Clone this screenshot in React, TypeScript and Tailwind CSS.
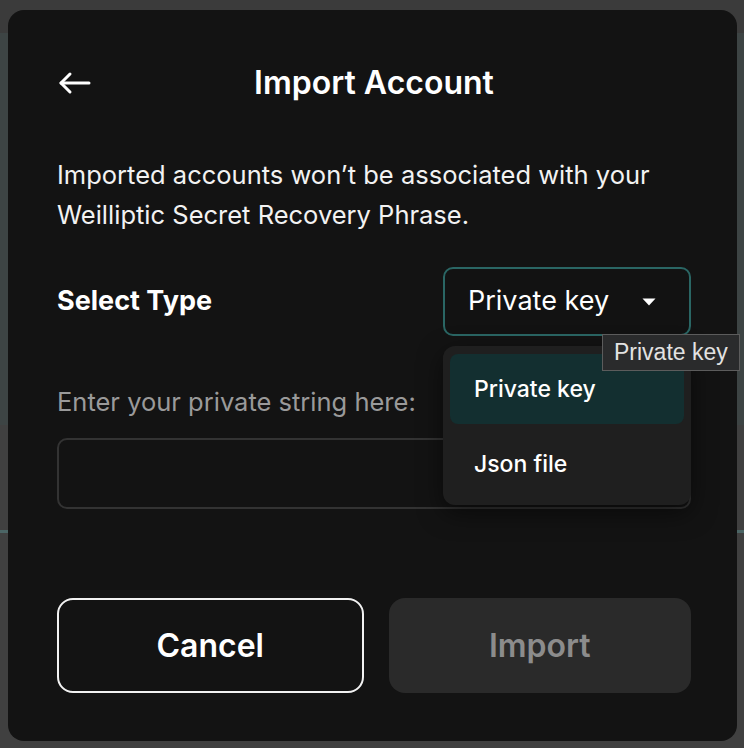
import { useState } from 'react'

const font = { fontFamily: 'Inter, "Noto Sans", sans-serif' }

function BackArrow() {
  return (
    <svg width="34" height="24" viewBox="0 0 34 24" fill="none" stroke="#ffffff" strokeWidth="3" strokeLinecap="round" strokeLinejoin="round">
      <line x1="3" y1="12" x2="31" y2="12" />
      <polyline points="12 3 3 12 12 21" />
    </svg>
  )
}

function Caret() {
  return (
    <svg width="14" height="8" viewBox="0 0 14 8" fill="#ffffff">
      <path d="M0.5 0.5 H13.5 L7 7.5 Z" />
    </svg>
  )
}

export default function App() {
  const [type, setType] = useState('Private key')
  const [open] = useState(true)

  return (
    <div className="relative w-[744px] h-[748px] overflow-hidden bg-[#3c3c3c]" style={font}>
      {/* faded page behind the dialog */}
      <div className="flex flex-col h-full">
        <div className="h-[33px] bg-[#3b3b3b]" />
        <div className="h-[392px] bg-[#3d4444]" />
        <div className="h-[105px] bg-[#404040]" />
        <div className="h-[3px] bg-[#4b6565]" />
        <div className="flex-1 bg-[#404040]" />
      </div>

      {/* dialog */}
      <div className="absolute left-[8px] top-[10px] w-[729px] h-[731px] rounded-[16px] bg-[#131313] pl-[49px] pr-[46px] pt-[43px] text-white">
        <div className="relative flex items-center justify-center h-[60px]">
          <button className="absolute left-[1px] top-[18px]">
            <BackArrow />
          </button>
          <h1 className="text-[32px] font-semibold">Import Account</h1>
        </div>

        <p className="mt-[42px] text-[25.5px] leading-[40px] text-[#f2f2f2]">
          Imported accounts won’t be associated with your Weilliptic Secret Recovery Phrase.
        </p>

        <div className="mt-[32px] flex items-center justify-between h-[69px]">
          <span className="text-[27px] font-bold">Select Type</span>
          <div className="relative w-[248px] h-[69px]">
            <button className="w-full h-full flex items-center justify-between pl-[23px] pr-[33px] rounded-[10px] border-2 border-[#2a6664] bg-[#121212]">
              <span className="text-[27px]">{type}</span>
              <Caret />
            </button>

            {open && (
              <div className="absolute left-0 top-[79px] w-[248px] h-[159px] rounded-[12px] bg-[#1f1f1f] px-[7px] pt-[8px] shadow-[0_8px_24px_rgba(0,0,0,0.5)] z-10">
                <div
                  className="flex items-center h-[70px] pl-[24px] rounded-[8px] bg-[#132f30] text-[23px] font-medium"
                  onClick={() => setType('Private key')}
                >
                  Private key
                </div>
                <div
                  className="mt-[5px] flex items-center h-[70px] pl-[24px] rounded-[8px] text-[23px] font-medium"
                  onClick={() => setType('Json file')}
                >
                  Json file
                </div>
              </div>
            )}
          </div>
        </div>

        <div className="mt-[50px] h-[32px] flex items-center text-[25.5px] text-[#9a9a9a]">
          Enter your private string here:
        </div>
        <input className="mt-[20px] w-full h-[71px] rounded-[10px] border-2 border-[#333333] bg-[#131313] outline-none px-4 text-[22px]" />

        <div className="mt-[89px] flex gap-[25px]">
          <button className="flex-1 h-[95px] rounded-[16px] border-2 border-[#f2f2f2] text-[32px] font-semibold">
            Cancel
          </button>
          <button disabled className="flex-1 h-[95px] rounded-[16px] bg-[#2a2a2a] text-[32px] font-semibold text-[#8c8c8c]">
            Import
          </button>
        </div>
      </div>

      {/* native title tooltip */}
      <div
        className="absolute left-[602px] top-[334px] h-[37px] px-[11px] flex items-center bg-[#2a2b2c] border border-[#5c5c5c] text-[23px] text-[#e2e2e2] z-20"
        style={{ fontFamily: '"Liberation Sans", Arial, sans-serif' }}
      >
        Private key
      </div>
    </div>
  )
}
